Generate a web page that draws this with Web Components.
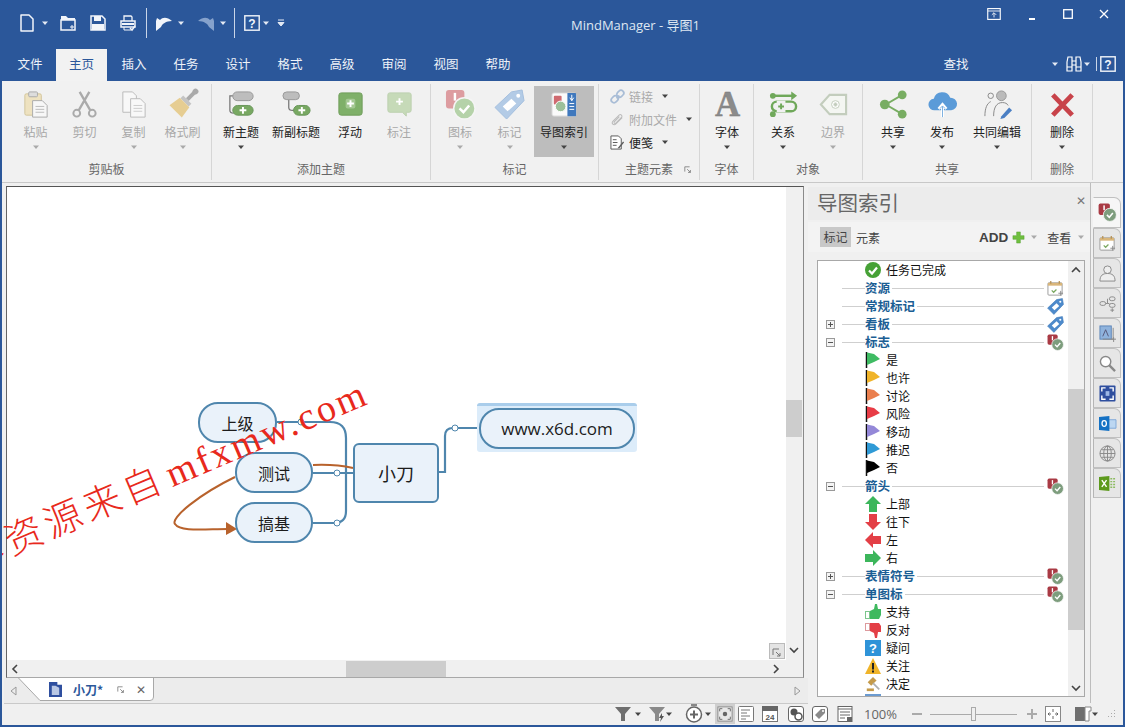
<!DOCTYPE html>
<html>
<head>
<meta charset="utf-8">
<style>
    html, body { margin: 0; padding: 0; height: 100%; overflow: hidden; }
</style>
</head>
<body>
<app-window>
    <title-bar></title-bar>
    <rib-bon>
        <rib-group w="210" pl="9" label="剪贴板">
            <rib-btn w="49" icon="paste" off>粘贴</rib-btn>
            <rib-btn w="49" icon="cut" off noarrow>剪切</rib-btn>
            <rib-btn w="49" icon="copy" off>复制</rib-btn>
            <rib-btn w="49" icon="brush" off>格式刷</rib-btn>
        </rib-group>
        <rib-group w="219" pl="4" label="添加主题">
            <rib-btn w="50" icon="newtopic">新主题</rib-btn>
            <rib-btn w="60" icon="subtopic" noarrow>新副标题</rib-btn>
            <rib-btn w="48" icon="float" noarrow>浮动</rib-btn>
            <rib-btn w="50" icon="callout" off noarrow>标注</rib-btn>
        </rib-group>
        <rib-group w="168" pl="4" label="标记">
            <rib-btn w="50" icon="mark-off" off>图标</rib-btn>
            <rib-btn w="49" icon="tag-off" off>标记</rib-btn>
            <rib-btn w="60" icon="mapindex" active>导图索引</rib-btn>
        </rib-group>
        <rib-group w="101" pl="8" label="主题元素" launcher>
            <small-btns>
                <small-btn icon="link" off>链接</small-btn>
                <small-btn icon="clip" off>附加文件</small-btn>
                <small-btn icon="note">便笺</small-btn>
            </small-btns>
        </rib-group>
        <rib-group w="54" pl="2" label="字体">
            <rib-btn w="50" icon="font">字体</rib-btn>
        </rib-group>
        <rib-group w="109" pl="4" label="对象">
            <rib-btn w="50" icon="relation">关系</rib-btn>
            <rib-btn w="50" icon="boundary" off>边界</rib-btn>
        </rib-group>
        <rib-group w="169" pl="5" label="共享">
            <rib-btn w="50" icon="share">共享</rib-btn>
            <rib-btn w="48" icon="publish">发布</rib-btn>
            <rib-btn w="62" icon="coedit">共同编辑</rib-btn>
        </rib-group>
        <rib-group w="61" pl="5" label="删除">
            <rib-btn w="50" icon="delete">删除</rib-btn>
        </rib-group>
    </rib-bon>
    <main-area>
        <map-pane slot="map">
            <map-node x="198" y="402" w="79" h="41" r="20">上级</map-node>
            <map-node x="235" y="452" w="78" h="41" r="20">测试</map-node>
            <map-node x="235" y="502" w="78" h="41" r="20">搞基</map-node>
            <map-node x="353" y="443" w="86" h="60" r="6" fs="18">小刀</map-node>
            <map-node x="479" y="408" w="156" h="41" r="20" fs="17" selected>www.x6d.com</map-node>
        </map-pane>
        <index-panel slot="panel">
            <idx-row icon="done">任务已完成</idx-row>
            <idx-row head icon="calendar">资源</idx-row>
            <idx-row head icon="tag">常规标记</idx-row>
            <idx-row head toggle="+" icon="tag">看板</idx-row>
            <idx-row head toggle="-" icon="mark">标志</idx-row>
            <idx-row icon="flag-green">是</idx-row>
            <idx-row icon="flag-yellow">也许</idx-row>
            <idx-row icon="flag-orange">讨论</idx-row>
            <idx-row icon="flag-red">风险</idx-row>
            <idx-row icon="flag-purple">移动</idx-row>
            <idx-row icon="flag-blue">推迟</idx-row>
            <idx-row icon="flag-black">否</idx-row>
            <idx-row head toggle="-" icon="mark">箭头</idx-row>
            <idx-row icon="arrow-up">上部</idx-row>
            <idx-row icon="arrow-down">往下</idx-row>
            <idx-row icon="arrow-left">左</idx-row>
            <idx-row icon="arrow-right">右</idx-row>
            <idx-row head toggle="+" icon="mark">表情符号</idx-row>
            <idx-row head toggle="-" icon="mark">单图标</idx-row>
            <idx-row icon="thumb-up">支持</idx-row>
            <idx-row icon="thumb-down">反对</idx-row>
            <idx-row icon="question">疑问</idx-row>
            <idx-row icon="warning">关注</idx-row>
            <idx-row icon="gavel">决定</idx-row>
            <idx-row icon="bluebox"></idx-row>
        </index-panel>
        <side-tabs slot="tabs"></side-tabs>
    </main-area>
    <status-bar></status-bar>
    <water-mark></water-mark>
</app-window>

<script>
    const W = '#f2f5fa'
    const flag = (c) => `<svg viewBox="0 0 16 16"><path d="M1.500 0V16" stroke="#111" stroke-width="1.500"/><path d="M2 .5 9 2l6 5-6 3-7 3z" fill="${c}"/></svg>`
    const plus = (x, y, s, c) => `<path d="M${x - s} ${y}h${2 * s}M${x} ${y - s}v${2 * s}" stroke="${c}" stroke-width="2"/>`
    const markIcon = (a, b) => `<svg viewBox="0 0 32 32"><rect x="1" y="1" width="19" height="19" rx="3" fill="${a}"/><rect x="9" y="4" width="2.500" height="8" fill="#fff"/><circle cx="20" cy="20" r="11" fill="${b}" stroke="#f5f5f5" stroke-width="1.500"/><path d="M15 20l4 4 6-7" fill="none" stroke="#fff" stroke-width="2.600"/></svg>`
    const tagIcon = (c, d) => `<svg viewBox="0 0 32 32"><path d="M1 19 18 3l11-2 2 11L13 31z" fill="${c}" stroke="${d}"/><path d="M9 18 18 10l5 5-9 8z" fill="#fff"/><circle cx="25" cy="7" r="2" fill="#fff"/></svg>`

    // every icon is kept here, <x-icon name="..."> looks them up
    const ICONS = {
        // title bar
        doc: `<svg viewBox="0 0 14 18"><path d="M1 1h8l4 4v12H1z" fill="none" stroke="${W}" stroke-width="1.500" stroke-linejoin="round"/></svg>`,
        open: `<svg viewBox="0 0 16 16"><path d="M1 1h5l2 2h7v2H1z" fill="${W}"/><path d="M1 5h14v10H1z" fill="#2b579a" stroke="${W}" stroke-width="1.500"/><path d="M10 12h4M12 10v4" stroke="${W}"/></svg>`,
        save: `<svg viewBox="0 0 16 16"><path d="M1 1h11l3 3v11H1z" fill="none" stroke="${W}" stroke-width="1.500"/><path d="M4 1h7v5H4z" fill="${W}"/><path d="M2 9h12v6H2z" fill="${W}"/></svg>`,
        print: `<svg viewBox="0 0 16 16"><path d="M4 6V1h7l1 1v4" fill="none" stroke="${W}" stroke-width="1.300"/><path d="M1 6h14v6H1z" fill="none" stroke="${W}" stroke-width="1.500"/><path d="M2 8h12v2H2z" fill="${W}"/><path d="M4 12v3h7" fill="none" stroke="${W}"/><path d="M10 13l2 2 3-4" fill="none" stroke="${W}" stroke-width="1.500"/></svg>`,
        undo: `<svg viewBox="0 0 18 18"><path d="M1 7v10l5-4C7 10 11 7 17 7 12 3 8 3 5 6L2 4z" fill="${W}"/></svg>`,
        redo: `<svg viewBox="0 0 18 18"><path d="M17 7v10l-5-4C11 10 7 7 1 7 6 3 10 3 13 6l3-2z" fill="#86a2cc"/></svg>`,
        help: `<svg viewBox="0 0 16 16"><rect x=".8" y=".8" width="14.400" height="14.400" fill="none" stroke="${W}" stroke-width="1.400"/><text x="8" y="13" font-size="12" font-weight="bold" font-family="Liberation Sans" text-anchor="middle" fill="${W}">?</text></svg>`,
        caretw: `<svg viewBox="0 0 8 8"><path d="M1 2.500h6L4 6z" fill="#e4eaf4"/></svg>`,
        cust: `<svg viewBox="0 0 8 10"><path d="M1 2h6M1 4.500h6L4 8z" fill="#e4eaf4" stroke="#e4eaf4"/></svg>`,
        ribbonopt: `<svg viewBox="0 0 16 14"><rect x=".7" y=".7" width="14.600" height="12.600" fill="none" stroke="#fff" stroke-width="1.300"/><path d="M1 3.500h14" stroke="#fff"/><path d="M8 11V6M5.500 8 8 5.500 10.500 8" fill="none" stroke="#fff"/></svg>`,
        binoc: `<svg viewBox="0 0 16 16"><path d="M2 1h4v14H1V6zM10 1h4l1 5v9h-5z" fill="none" stroke="#fff" stroke-width="1.200"/><path d="M6 5h4M6 9h4M1 11h5M10 11h5" stroke="#fff"/></svg>`,

        // clipboard group
        paste: `<svg viewBox="0 0 32 32"><rect x="5" y="5" width="17" height="22" rx="1.500" fill="#eee2c0" stroke="#d3c59c"/><rect x="9" y="3" width="9" height="5" rx="1" fill="#ddd" stroke="#aaa"/><path d="M13 12h10l5 5v12H13z" fill="#f7f7f7" stroke="#aaa"/><path d="M16 18h9M16 21h9M16 24h9" stroke="#bbb"/></svg>`,
        cut: `<svg viewBox="0 0 32 32"><circle cx="8" cy="25" r="3.500" fill="none" stroke="#aaa" stroke-width="2"/><circle cx="24" cy="25" r="3.500" fill="none" stroke="#aaa" stroke-width="2"/><path d="M10 22 21 3M22 22 11 3" stroke="#aaa" stroke-width="2.400"/></svg>`,
        copy: `<svg viewBox="0 0 32 32"><path d="M5 3h10l4 4v17H5z" fill="#f8f8f8" stroke="#bbb"/><path d="M13 10h10l5 5v14H13z" fill="#f8f8f8" stroke="#bbb"/><path d="M16 17h9M16 20h9M16 23h9" stroke="#ccc"/></svg>`,
        brush: `<svg viewBox="0 0 32 32"><g transform="rotate(45 16 16)"><rect x="14" y="-3" width="4" height="12" fill="#aaa"/><circle cx="16" cy="-3" r="3" fill="#aaa"/><rect x="10" y="9" width="12" height="4" fill="#c4c4c4"/><path d="M9 13h14l2 13H7z" fill="#e6cd92"/></g></svg>`,

        // add topic group
        newtopic: `<svg viewBox="0 0 32 32"><path d="M8 7H4v15q0 3 4 3" fill="none" stroke="#777" stroke-width="1.300"/><rect x="7" y="3" width="21" height="9" rx="4.500" fill="#bdbdbd" stroke="#999"/><rect x="7" y="17" width="21" height="10" rx="5" fill="#78a862" stroke="#68965a"/>${plus(17.5, 22, 3.5, '#fff')}</svg>`,
        subtopic: `<svg viewBox="0 0 32 32"><path d="M8 11v8q0 3 4 3h3" fill="none" stroke="#777" stroke-width="1.300"/><rect x="2" y="3" width="17" height="8" rx="4" fill="#bdbdbd" stroke="#999"/><rect x="13" y="17" width="17" height="10" rx="5" fill="#78a862" stroke="#68965a"/>${plus(21.5, 22, 3.5, '#fff')}</svg>`,
        float: `<svg viewBox="0 0 32 32"><rect x="4" y="4" width="24" height="23" rx="2.500" fill="#7fb069" stroke="#6d9c59"/><rect x="11" y="10" width="10" height="10" rx="2" fill="#a4c893"/>${plus(16, 15, 3.5, '#fff')}</svg>`,
        callout: `<svg viewBox="0 0 32 32"><path d="M6 4h20q2 0 2 2v16q0 2-2 2h-3v4l-4-4H6q-2 0-2-2V6q0-2 2-2z" fill="#c6dab8" stroke="#bccfae"/>${plus(16, 13, 3.5, '#fff')}</svg>`,

        // markers group
        'mark-off': markIcon('#dd9ca0', '#b5d2a9'),
        mark: markIcon('#a93a44', '#7d9d7d'),
        'tag-off': tagIcon('#b3cbe6', '#a3bedd'),
        tag: tagIcon('#4d8acb', '#3f79b8'),
        mapindex: `<svg viewBox="0 0 32 32"><rect x="3" y="4" width="25" height="24" rx="2" fill="#fafafa" stroke="#d0d0d0"/><path d="M19 4h8q1 0 1 1v22q0 1-1 1h-8z" fill="#3f78bd"/><rect x="5" y="7" width="8" height="9" rx="1" fill="#cf6a70"/><circle cx="12" cy="18" r="5.500" fill="#9dc09a" stroke="#fff"/><path d="M21 15h5M21 18h5M21 21h5" stroke="#fff"/><path d="M23.500 6v6M21.500 9 23.500 12 25.500 9" stroke="#fff" fill="none"/></svg>`,

        // topic elements
        link: `<svg viewBox="0 0 16 16"><path d="M7 10 10 7" stroke="#9db6d3" stroke-width="2"/><rect x="1" y="8" width="8" height="6" rx="3" transform="rotate(-45 5 11)" fill="none" stroke="#a9bdd6" stroke-width="1.800"/><rect x="7" y="2" width="8" height="6" rx="3" transform="rotate(-45 11 5)" fill="none" stroke="#a9bdd6" stroke-width="1.800"/></svg>`,
        clip: `<svg viewBox="0 0 16 16"><path d="M13 6 6 13c-2 2-5-1-3-3l7-7c1.500-1 3.500 1 2.500 2.500L6 12c-1 1-2-.5-1.500-1.500L10 5" fill="none" stroke="#bbb" stroke-width="1.100"/></svg>`,
        note: `<svg viewBox="0 0 16 16"><path d="M1 1h8l3 3v11H1z" fill="#fff" stroke="#555"/><path d="M3 5h4M3 8h5M3 11h4" stroke="#555"/><path d="M8 14 14 7l1 1-5 6z" fill="#5a5a5a"/></svg>`,
        font: `<svg viewBox="0 0 32 32"><text x="16" y="28" font-size="36" font-weight="bold" font-family="Liberation Serif" text-anchor="middle" fill="#8b8b8b" stroke="#777" stroke-width=".4">A</text></svg>`,

        // object group
        relation: `<svg viewBox="0 0 32 32"><path d="M6 7h20" stroke="#6fa85a" stroke-width="2.500"/><path d="M24 2.500l6 4.500-6 4.500z" fill="#6fa85a"/><circle cx="5" cy="7" r="3" fill="#6fa85a"/><rect x="4" y="13" width="25" height="10" rx="5" fill="none" stroke="#6fa85a" stroke-width="2.500"/><rect x="9" y="12" width="9" height="12" fill="#f1f1f1"/>${plus(13.5, 18, 3, '#6fa85a')}<circle cx="5" cy="26" r="3" fill="#6fa85a"/></svg>`,
        boundary: `<svg viewBox="0 0 32 32"><path d="M3 16 12 6h17v20H12z" fill="#f4f6f2" stroke="#c3cdbd" stroke-width="2.200"/><circle cx="18" cy="16" r="4" fill="#fff" stroke="#c3cdbd"/>${plus(18, 16, 2, '#c3cdbd')}</svg>`,

        // share group
        share: `<svg viewBox="0 0 32 32"><path d="M8 16 25 6M8 16 25 26" stroke="#78ad62" stroke-width="2"/><circle cx="7" cy="16" r="5" fill="#78ad62"/><circle cx="25" cy="6" r="4.500" fill="#78ad62"/><circle cx="25" cy="26" r="4.500" fill="#78ad62"/></svg>`,
        publish: `<svg viewBox="0 0 32 32"><path d="M8 22a6 6 0 0 1-1-12 9 9 0 0 1 17-1 6.500 6.500 0 0 1 1 13z" fill="#5b9bd8"/><path d="M16 29V17M12 20.500 16 16 20 20.500" fill="none" stroke="#fff" stroke-width="3"/><path d="M16 29V18M13.500 20 16 17.500 18.500 20" fill="none" stroke="#5b9bd8" stroke-width=".8"/></svg>`,
        coedit: `<svg viewBox="0 0 32 32"><circle cx="20" cy="7" r="5" fill="#bbb" stroke="#999"/><circle cx="9" cy="7" r="2.800" fill="none" stroke="#888"/><path d="M3 28c0-8 2-13 6-15M12 28c0-9 3-14 9-14 3 0 5 1 6 3" fill="none" stroke="#888"/><path d="M20 28l8-9 3 3-8 8-4 1z" fill="#4a7fc4"/></svg>`,
        delete: `<svg viewBox="0 0 32 32"><path d="M6 6 26 27M26 6 6 27" stroke="#c8434a" stroke-width="5"/></svg>`,

        // panel
        done: `<svg viewBox="0 0 16 16"><circle cx="8" cy="8" r="8" fill="#46a136"/><path d="M4 8.500 7 11.500 12 5.500" fill="none" stroke="#fff" stroke-width="2.200"/></svg>`,
        calendar: `<svg viewBox="0 0 18 18"><rect x="1" y="3" width="15" height="13" rx="1" fill="#fff" stroke="#999"/><path d="M1 3h15v3H1z" fill="#d9b67a"/><path d="M4 1v3M13 1v3" stroke="#b58f50" stroke-width="1.300"/><path d="M5 11l2 2 3-3" fill="none" stroke="#7aa860" stroke-width="1.300"/><path d="M12 14h5M14.500 11.500v5" stroke="#888"/></svg>`,
        addwhite: `<svg viewBox="0 0 14 14"><path d="M5 1h4v4h4v4H9v4H5V9H1V5h4z" fill="#6fbf3f" stroke="#4f9a2a" stroke-width=".5"/></svg>`,
        'flag-green': flag('#3fbb63'), 'flag-yellow': flag('#f0b429'), 'flag-orange': flag('#ea7f4e'),
        'flag-red': flag('#e83c46'), 'flag-purple': flag('#9488d8'), 'flag-blue': flag('#2f9ad6'), 'flag-black': flag('#000'),
        'arrow-up': `<svg viewBox="0 0 16 16"><path d="M8 0 16 8H12V16H4V8H0z" fill="#3cb65b"/></svg>`,
        'arrow-down': `<svg viewBox="0 0 16 16"><path d="M8 16 16 8H12V0H4V8H0z" fill="#e33f46"/></svg>`,
        'arrow-left': `<svg viewBox="0 0 16 16"><path d="M0 8 8 0V4H16V12H8V16z" fill="#e33f46"/></svg>`,
        'arrow-right': `<svg viewBox="0 0 16 16"><path d="M16 8 8 0V4H0V12H8V16z" fill="#3cb65b"/></svg>`,
        'thumb-up': `<svg viewBox="0 0 16 16"><rect x=".5" y="7.500" width="4" height="7" fill="#fff" stroke="#7cc68d"/><path d="M5 7 9 5l1-5h2l1 5h3v6l-2 4H5z" fill="#3fb95f"/></svg>`,
        'thumb-down': `<svg viewBox="0 0 16 16"><rect x=".5" y="1.500" width="4" height="7" fill="#fff" stroke="#dd9a9d"/><path d="M5 1h9l2 3v6h-3l-1 6h-2L9 11 5 9z" fill="#e33f46"/></svg>`,
        question: `<svg viewBox="0 0 16 16"><rect width="16" height="16" fill="#2f93d8"/><text x="8" y="13" font-size="13" font-weight="bold" font-family="Liberation Sans" text-anchor="middle" fill="#fff">?</text></svg>`,
        warning: `<svg viewBox="0 0 16 16"><path d="M8 0 16 16H0z" fill="#f0b429"/><path d="M8 5v6.500M8 12.500v2" stroke="#222" stroke-width="2"/></svg>`,
        gavel: `<svg viewBox="0 0 16 18"><path d="M2 7 8 1l4 4-6 6z" fill="#c49a4a"/><path d="M8 8l7 7" stroke="#b0b0b0" stroke-width="2"/><path d="M1 14h8v3H1z" fill="#c49a4a"/></svg>`,
        bluebox: `<svg viewBox="0 0 16 16"><rect width="16" height="16" fill="#6c9bd0"/></svg>`,
        funnel: `<svg viewBox="0 0 16 16"><path d="M0 1h16l-6 7v7H6V8z" fill="#6f6f6f"/></svg>`,
        funnel2: `<svg viewBox="0 0 16 16"><path d="M0 1h16l-6 7v7H6V8z" fill="#8a8a8a"/><path d="M13 7l-3 5h2l-1 4 4-6h-2z" fill="#555"/></svg>`,

        // side tabs
        person: `<svg viewBox="0 0 18 18"><circle cx="9" cy="5" r="4" fill="#eee" stroke="#888"/><path d="M1 17c0-6 3-8 8-8s8 2 8 8z" fill="#eee" stroke="#888"/></svg>`,
        topics: `<svg viewBox="0 0 18 18"><rect x="1" y="7" width="6" height="4" rx="2" fill="none" stroke="#888"/><rect x="11" y="2" width="6" height="4" rx="2" fill="none" stroke="#888"/><rect x="11" y="9" width="6" height="4" rx="2" fill="none" stroke="#888"/><path d="M7 9h2M9 4v5h2M14 14v4M12 16h4" fill="none" stroke="#888"/></svg>`,
        notes: `<svg viewBox="0 0 18 18"><rect x="1" y="1" width="12" height="14" fill="#8fb3dd" stroke="#5d85b8"/><path d="M4 12 7 5l3 7" fill="none" stroke="#557" /><path d="M15 3v12H4" fill="none" stroke="#888"/><path d="M13 15h5M15.500 13v5" stroke="#888"/></svg>`,
        search: `<svg viewBox="0 0 18 18"><circle cx="7" cy="7" r="5.500" fill="#fff" stroke="#888" stroke-width="1.500"/><path d="M11 11l6 6" stroke="#888" stroke-width="2.500"/></svg>`,
        target: `<svg viewBox="0 0 18 18"><rect x=".5" y=".5" width="17" height="17" rx="1" fill="#2f4f9f"/><path d="M3 7V3h4M11 3h4v4M15 11v4h-4M7 15H3v-4" fill="none" stroke="#fff" stroke-width="1.500"/><rect x="7" y="6.500" width="4" height="5" fill="#9db7e6"/></svg>`,
        outlook: `<svg viewBox="0 0 18 18"><path d="M9 5h9v9H9z" fill="#bcd7f2" stroke="#7fa8d8"/><path d="M0 2l11-1v16L0 16z" fill="#1572c4"/><ellipse cx="5.500" cy="9" rx="2.300" ry="3" fill="none" stroke="#fff" stroke-width="1.400"/></svg>`,
        globe: `<svg viewBox="0 0 18 18"><circle cx="9" cy="9" r="8" fill="#e4e4e4" stroke="#888"/><ellipse cx="9" cy="9" rx="4" ry="8" fill="none" stroke="#888"/><path d="M1 9h16M2.500 5h13M2.500 13h13M9 1v16" stroke="#888"/></svg>`,
        excel: `<svg viewBox="0 0 18 18"><path d="M0 2l11-1v16L0 16z" fill="#5d9a1d"/><path d="M3 5.500 8 12.500M8 5.500 3 12.500" stroke="#fff" stroke-width="1.500"/><path d="M12 4h5M12 7h5M12 10h5M12 13h5" stroke="#8dbb62" stroke-width="1.500" stroke-dasharray="2 1"/></svg>`,

        // status bar
        clock: `<svg viewBox="0 0 18 18"><circle cx="9" cy="9.500" r="7.500" fill="#fff" stroke="#666" stroke-width="1.500"/><path d="M5 9.500h8M9 5.500v8" stroke="#666" stroke-width="2"/><path d="M6 0h6" stroke="#666" stroke-width="1.500"/></svg>`,
        focus: `<svg viewBox="0 0 18 18"><rect x="1" y="1" width="16" height="16" fill="#e8e8e8" stroke="#888"/><path d="M3 6V3h3M12 3h3v3M15 12v3h-3M6 15H3v-3" fill="none" stroke="#666"/><circle cx="9" cy="9" r="2.500" fill="#666"/></svg>`,
        outline: `<svg viewBox="0 0 16 16"><rect x=".5" y=".5" width="15" height="15" rx="1" fill="#fff" stroke="#777"/><path d="M3 4h9M3 7h6M3 10h9M3 13h5" stroke="#777"/></svg>`,
        cal24: `<svg viewBox="0 0 16 16"><rect x=".5" y=".5" width="15" height="15" fill="#fff" stroke="#777"/><path d="M0 0h16v5H0z" fill="#666"/><text x="8" y="14" font-size="8" font-weight="bold" font-family="Liberation Sans" text-anchor="middle" fill="#555">24</text></svg>`,
        circles: `<svg viewBox="0 0 16 16"><rect x=".5" y=".5" width="15" height="15" rx="2.500" fill="#fff" stroke="#666"/><circle cx="6" cy="6" r="3.500" fill="#555"/><circle cx="10.500" cy="10.500" r="3.500" fill="#fff" stroke="#555" stroke-width="1.500"/></svg>`,
        tagbox: `<svg viewBox="0 0 16 16"><rect x=".5" y=".5" width="15" height="15" rx="2.500" fill="#fff" stroke="#666"/><path d="M3 9 9 3h4v4l-6 6z" fill="#8a8a8a"/><circle cx="11" cy="5" r="1" fill="#fff"/></svg>`,
        notesbox: `<svg viewBox="0 0 16 16"><rect x="1" y=".5" width="14" height="15" fill="#fff" stroke="#666"/><path d="M1 3h14M3 6h10M3 9h10M3 12h5" stroke="#666"/><rect x="10" y="11" width="5" height="4" fill="#666"/></svg>`,
        fit: `<svg viewBox="0 0 16 16"><rect x=".5" y=".5" width="15" height="15" fill="#fff" stroke="#888"/><path d="M8 3v3M8 10v3M3 8h3M10 8h3M3 8l1.500-1.500M3 8l1.500 1.500M13 8l-1.500-1.500M13 8l-1.500 1.500" stroke="#666" fill="none"/></svg>`,
        panelview: `<svg viewBox="0 0 16 16"><path d="M0 1h10v14H0z" fill="#6f6f6f"/><path d="M10 1h6v4h-2v10h-4z" fill="#fff" stroke="#888"/></svg>`,
        grip: `<svg viewBox="0 0 10 10"><path d="M8 1h1v1H8zM5 4h1v1H5zM8 4h1v1H8zM2 7h1v1H2zM5 7h1v1H5zM8 7h1v1H8z" fill="#aaa"/></svg>`,
        caret: `<svg viewBox="0 0 8 8"><path d="M1 2.500h6L4 6z" fill="#444"/></svg>`,
        caretoff: `<svg viewBox="0 0 8 8"><path d="M1 2.500h6L4 6z" fill="#aaa"/></svg>`,
        launcher: `<svg viewBox="0 0 10 10"><path d="M1 7V1h6" fill="none" stroke="#777"/><path d="M4 4l4 4M8 5v3H5" fill="none" stroke="#777"/></svg>`,
        mapicon: `<svg viewBox="0 0 14 16"><path d="M0 0h9v3h5v13H0z" fill="#2f4f9f"/><path d="M3 4h4l4 2v8H3z" fill="#b9c7e4"/></svg>`,
    }

    class XIcon extends HTMLElement {
        connectedCallback() {
            if (this.shadowRoot) return
            const size = (this.getAttribute('size') || '16').split(' ')
            const w = size[0]
            const h = size[1] || w
            this.attachShadow({ mode: 'open' }).innerHTML = `
                <style>
                    :host { display: inline-flex; flex: none; width: ${w}px; height: ${h}px; }
                    svg { width: 100%; height: 100%; display: block; overflow: visible; }
                </style>
                ${ICONS[this.getAttribute('name')] || ''}`
        }
    }
    customElements.define('x-icon', XIcon)

    class AppWindow extends HTMLElement {
        constructor() {
            super()
            this.attachShadow({ mode: 'open' }).innerHTML = `
                <style>
                    :host {
                        display: flex; flex-direction: column; position: relative; overflow: hidden;
                        width: 1125px; height: 727px; box-sizing: border-box;
                        border: 2px solid #2b579a; border-top: 0;
                        background: #f0f0f0; color: #222;
                        font: 12px "Noto Sans CJK SC", "Liberation Sans", sans-serif;
                    }
                </style>
                <slot></slot>`
        }
    }
    customElements.define('app-window', AppWindow)

    class TitleBar extends HTMLElement {
        constructor() {
            super()
            const tabs = ['文件', '主页', '插入', '任务', '设计', '格式', '高级', '审阅', '视图', '帮助']
            this.attachShadow({ mode: 'open' }).innerHTML = `
                <style>
                    :host { display: block; flex: none; height: 81px; background: #2b579a; color: #eef2f8; margin: 0 -2px; }
                    .top { display: flex; align-items: center; height: 49px; }
                    .qat { display: flex; align-items: center; width: 571px; height: 30px; padding-left: 20px; box-sizing: border-box; flex: none; margin-top: -4px; }
                    .sep { width: 1px; height: 30px; background: #c9d5e8; flex: none; }
                    .title { flex: 1; font: 13px "Open Sans", "Noto Sans CJK SC", sans-serif; color: #dfe7f2; margin-top: -1px; }
                    .win { display: flex; align-items: center; margin-top: -21px; padding-right: 16px; }
                    .win svg { display: block; }
                    .row { display: flex; align-items: stretch; height: 32px; padding-left: 4px; }
                    .tab { width: 52px; flex: none; text-align: center; font-size: 12.5px; line-height: 30px; }
                    .tab.on { background: #f2f2f2; color: #2b579a; width: 51px; margin-left: 0; margin-right: 1px; }
                    .find { margin-left: 406px; width: 52px; flex: none; text-align: center; font-size: 12.5px; line-height: 30px; }
                    .tools { display: flex; align-items: center; margin-left: 69px; height: 30px; flex: none; }
                    .bar { width: 1px; height: 14px; background: #c9d5e8; margin: 0 3px 0 5px; }
                </style>
                <div class="top">
                    <div class="qat">
                        <x-icon name="doc" size="14 18"></x-icon>
                        <x-icon name="caretw" size="8" style="margin-left:7px"></x-icon>
                        <x-icon name="open" style="margin-left:11px"></x-icon>
                        <x-icon name="save" style="margin-left:14px"></x-icon>
                        <x-icon name="print" style="margin-left:14px"></x-icon>
                        <span class="sep" style="margin-left:10px"></span>
                        <x-icon name="undo" size="18" style="margin-left:8px"></x-icon>
                        <x-icon name="caretw" size="8" style="margin-left:4px"></x-icon>
                        <x-icon name="redo" size="18" style="margin-left:12px"></x-icon>
                        <x-icon name="caretw" size="8" style="margin-left:4px"></x-icon>
                        <span class="sep" style="margin-left:7px"></span>
                        <x-icon name="help" style="margin-left:9px"></x-icon>
                        <x-icon name="caretw" size="8" style="margin-left:2px"></x-icon>
                        <x-icon name="cust" size="8 10" style="margin-left:7px"></x-icon>
                    </div>
                    <div class="title">MindManager - 导图1</div>
                    <div class="win">
                        <x-icon name="ribbonopt" size="14 12"></x-icon>
                        <svg width="10" height="10" viewBox="0 0 10 10" style="margin-left:26px;margin-top:5px"><path d="M2 7h6" stroke="#fff" stroke-width="2"/></svg>
                        <svg width="10" height="10" viewBox="0 0 10 10" style="margin-left:26px"><rect x=".7" y=".7" width="8.600" height="8.600" fill="none" stroke="#fff" stroke-width="1.300"/></svg>
                        <svg width="10" height="10" viewBox="0 0 10 10" style="margin-left:26px"><path d="M1 1l8 8M9 1l-8 8" stroke="#fff" stroke-width="1.300"/></svg>
                    </div>
                </div>
                <div class="row">
                    ${tabs.map((t, i) => `<div class="tab ${i == 1 ? 'on' : ''}">${t}</div>`).join('')}
                    <div class="find">查找</div>
                    <div class="tools">
                        <x-icon name="caretw" size="8"></x-icon>
                        <x-icon name="binoc" size="16" style="margin-left:7px"></x-icon>
                        <x-icon name="caretw" size="8" style="margin-left:1px"></x-icon>
                        <span class="bar"></span>
                        <x-icon name="help" size="16"></x-icon>
                    </div>
                </div>`
        }
    }
    customElements.define('title-bar', TitleBar)

    class RibBon extends HTMLElement {
        constructor() {
            super()
            this.attachShadow({ mode: 'open' }).innerHTML = `
                <style>
                    :host { display: flex; flex: none; height: 102px; background: #f1f1f1; border-bottom: 1px solid #c8c8c8; box-sizing: border-box; }
                </style>
                <slot></slot>`
        }
    }
    customElements.define('rib-bon', RibBon)

    class RibGroup extends HTMLElement {
        constructor() {
            super()
            const launcher = this.hasAttribute('launcher')
                ? '<x-icon class="launch" name="launcher" size="8"></x-icon>' : ''
            this.attachShadow({ mode: 'open' }).innerHTML = `
                <style>
                    :host {
                        display: flex; flex-direction: column; flex: none; box-sizing: border-box;
                        width: ${this.getAttribute('w')}px; height: 96px; margin-top: 3px;
                        border-right: 1px solid #d6d6d6;
                    }
                    .body { display: flex; height: 71px; margin-top: 2px; padding-left: ${this.getAttribute('pl')}px; }
                    .label { position: relative; text-align: center; line-height: 20px; margin-top: 2px; color: #666; }
                    .launch { position: absolute; right: 7px; top: 7px; }
                </style>
                <div class="body"><slot></slot></div>
                <div class="label">${this.getAttribute('label')}${launcher}</div>`
        }
    }
    customElements.define('rib-group', RibGroup)

    class RibBtn extends HTMLElement {
        constructor() {
            super()
            const off = this.hasAttribute('off')
            const arrow = this.hasAttribute('noarrow') ? '' : `<x-icon name="${off ? 'caretoff' : 'caret'}" size="8"></x-icon>`
            this.attachShadow({ mode: 'open' }).innerHTML = `
                <style>
                    :host {
                        display: flex; flex-direction: column; align-items: center; flex: none;
                        width: ${this.getAttribute('w')}px; height: 71px; padding-top: 3px; box-sizing: border-box;
                        color: ${off ? '#a8a8a8' : '#222'};
                        background: ${this.hasAttribute('active') ? '#bdbdbd' : 'none'};
                    }
                    .txt { line-height: 18px; margin-top: 3px; white-space: nowrap; height: 18px; }
                    .car { display: flex; height: 8px; margin-top: 2px; }
                </style>
                <x-icon name="${this.getAttribute('icon')}" size="31"></x-icon>
                <div class="txt"><slot></slot></div>
                <div class="car">${arrow}</div>`
        }
    }
    customElements.define('rib-btn', RibBtn)

    class SmallBtns extends HTMLElement {
        constructor() {
            super()
            this.attachShadow({ mode: 'open' }).innerHTML = `
                <style>
                    :host { display: flex; flex-direction: column; gap: 5px; padding: 1px 0 0 3px; }
                </style>
                <slot></slot>`
        }
    }
    customElements.define('small-btns', SmallBtns)

    class SmallBtn extends HTMLElement {
        constructor() {
            super()
            const off = this.hasAttribute('off')
            this.attachShadow({ mode: 'open' }).innerHTML = `
                <style>
                    :host { display: flex; align-items: center; height: 18px; color: ${off ? '#aaa' : '#222'}; white-space: nowrap; }
                    .t { margin-left: 4px; margin-right: 8px; }
                </style>
                <x-icon name="${this.getAttribute('icon')}" size="15"></x-icon>
                <span class="t"><slot></slot></span>
                <x-icon name="caret" size="8"></x-icon>`
        }
    }
    customElements.define('small-btn', SmallBtn)

    class MainArea extends HTMLElement {
        constructor() {
            super()
            this.attachShadow({ mode: 'open' }).innerHTML = `
                <style>
                    :host { display: flex; flex: 1; min-height: 0; }
                </style>
                <slot name="map"></slot>
                <slot name="panel"></slot>
                <slot name="tabs"></slot>`
        }
    }
    customElements.define('main-area', MainArea)

    class MapPane extends HTMLElement {
        constructor() {
            super()
            this.attachShadow({ mode: 'open' }).innerHTML = `
                <style>
                    :host { display: flex; flex-direction: column; width: 806px; flex: none; padding-top: 3px; box-sizing: border-box; }
                    .frame {
                        margin-left: 4px; width: 798px; flex: none; height: 492px; box-sizing: border-box;
                        border: 1px solid #8a8a8a; border-top-color: #555; border-left-color: #666; border-bottom-color: #a8a8a8;
                        display: grid; grid-template-columns: 779px 17px; grid-template-rows: 473px 17px;
                        background: #f0f0f0;
                    }
                    .canvas { position: relative; background: #fff; overflow: hidden; }
                    .canvas svg.links { position: absolute; left: 0; top: 0; }
                    .corner { position: absolute; right: 1px; bottom: 1px; width: 16px; height: 16px; background: #e4e4e4; border: 1px solid #bbb; box-sizing: border-box; }
                    .vs { position: relative; display: flex; flex-direction: column; }
                    .vs .thumb { width: 16px; height: 37px; background: #cdcdcd; margin-top: 213px; }
                    .arr { position: absolute; color: #444; }
                    .hs { display: flex; align-items: center; position: relative; }
                    .hs .thumb { width: 100px; height: 16px; background: #cdcdcd; margin-left: 339px; }
                    .tabs { display: flex; align-items: flex-start; height: 25px; flex: none; margin-left: 2px; position: relative; background: #ececec; border-bottom: 1px solid #c9c9c9; box-sizing: content-box; }
                    .tab { position: relative; margin-left: 14px; width: 136px; height: 23px; display: flex; align-items: center; }
                    .tab svg.bg { position: absolute; left: 0; top: 0; }
                    .tab .in { position: relative; display: flex; align-items: center; padding-left: 31px; }
                    .name { color: #2b579a; font-weight: 700; font-size: 12px; margin-left: 11px; width: 44px; }
                    .x { color: #666; font-size: 12px; margin-left: 11px; font-family: "Liberation Sans"; }
                    .tri { position: absolute; top: 8px; }
                </style>
                <div class="frame">
                    <div class="canvas">
                        <svg class="links" width="779" height="473" viewBox="7 187 779 473" fill="none">
                            <g stroke="#4f86ad" stroke-width="2.200">
                                <path d="M277 422H330Q346 422 346 438V511Q346 523 334 523H313"/>
                                <path d="M313 473H353"/>
                                <path d="M439 472H445V436Q445 428 453 428H479"/>
                            </g>
                            <path d="M313 465Q335 464 353 468" stroke="#b8622c" stroke-width="2"/>
                            <path d="M235 477C200 494 170 518 175 524C180 532 205 529 228 529" stroke="#b8622c" stroke-width="2"/>
                            <path d="M226 522 237 529 226 535z" fill="#b8622c"/>
                            <g fill="#fff" stroke="#4f86ad" stroke-width="1">
                                <circle cx="301" cy="422" r="3"/><circle cx="337" cy="473" r="3"/>
                                <circle cx="337" cy="523" r="3"/><circle cx="455" cy="428" r="3"/>
                            </g>
                        </svg>
                        <slot></slot>
                        <div class="corner"><x-icon name="launcher" size="10" style="margin:2px"></x-icon></div>
                    </div>
                    <div class="vs">
                        <div class="thumb"></div>
                        <svg class="arr" style="left:3px;bottom:6px" width="10" height="8" viewBox="0 0 10 8"><path d="M1 2l4 4 4-4" fill="none" stroke="#444" stroke-width="1.600"/></svg>
                    </div>
                    <div class="hs">
                        <div class="thumb"></div>
                        <svg class="arr" style="left:4px;top:4px" width="8" height="10" viewBox="0 0 8 10"><path d="M6 1 2 5l4 4" fill="none" stroke="#444" stroke-width="1.600"/></svg>
                        <svg class="arr" style="right:6px;top:4px" width="8" height="10" viewBox="0 0 8 10"><path d="M2 1l4 4-4 4" fill="none" stroke="#444" stroke-width="1.600"/></svg>
                    </div>
                    <div style="background:#f0f0f0"></div>
                </div>
                <div class="tabs">
                    <svg class="tri" style="left:6px" width="7" height="10" viewBox="0 0 7 10"><path d="M6 1 1 5l5 4z" fill="none" stroke="#999"/></svg>
                    <div class="tab">
                        <svg class="bg" width="136" height="23" viewBox="0 0 136 23"><path d="M.5 0 22 22.500H132Q135.500 22.500 135.500 19V0" fill="#fff" stroke="#a8a8a8"/></svg>
                        <div class="in">
                            <x-icon name="mapicon" size="13 15"></x-icon>
                            <span class="name">小刀*</span>
                            <x-icon name="launcher" size="8"></x-icon>
                            <span class="x">✕</span>
                        </div>
                    </div>
                    <svg class="tri" style="right:7px" width="7" height="10" viewBox="0 0 7 10"><path d="M1 1l5 4-5 4z" fill="none" stroke="#999"/></svg>
                </div>`
        }
    }
    customElements.define('map-pane', MapPane)

    class MapNode extends HTMLElement {
        constructor() {
            super()
            const a = (n) => Number(this.getAttribute(n))
            const selected = this.hasAttribute('selected')
            this.attachShadow({ mode: 'open' }).innerHTML = `
                <style>
                    :host {
                        position: absolute; display: block;
                        left: ${a('x') - 7}px; top: ${a('y') - 187}px; width: ${a('w')}px; height: ${a('h')}px;
                        font-size: ${this.getAttribute('fs') || 16}px; color: #1c1c1c;
                        font-family: ${selected ? '"Open Sans",' : ''} "Noto Sans CJK SC", sans-serif;
                    }
                    .sel {
                        position: absolute; left: -2px; right: -2px; top: -5px; bottom: -3px; box-sizing: border-box;
                        background: #dcecfa; border-top: 3px solid #a9cdeb; border-radius: 3px;
                    }
                    .pill {
                        position: relative; box-sizing: border-box; width: 100%; height: 100%;
                        display: flex; align-items: center; justify-content: center;
                        background: #eaf2fa; border: 2px solid #4f86ad; border-radius: ${a('r')}px;
                    }
                </style>
                ${selected ? '<div class="sel"></div>' : ''}
                <div class="pill"><slot></slot></div>`
        }
    }
    customElements.define('map-node', MapNode)

    class IndexPanel extends HTMLElement {
        constructor() {
            super()
            this.attachShadow({ mode: 'open' }).innerHTML = `
                <style>
                    :host {
                        display: flex; flex-direction: column; flex: none; width: 283px; box-sizing: border-box;
                        border-right: 1px solid #bdbdbd; background: #f0f0f0; padding-top: 4px; height: 520px;
                    }
                    .head { display: flex; align-items: center; height: 33px; box-sizing: border-box; background: #ececec; padding: 0 0 4px 9px; font-size: 20.500px; color: #666; }
                    .close { margin-left: auto; margin-right: 4px; color: #777; font-size: 12px; margin-top: -1px; font-family: "Liberation Sans"; }
                    .tool { display: flex; align-items: center; height: 30px; margin-top: 2px; background: #f3f3f3; padding-left: 12px; }
                    .chip { background: #c8c8c8; padding: 0 3.500px; line-height: 20px; color: #444; }
                    .el { margin-left: 5px; color: #444; }
                    .add { font: 700 13.500px "Liberation Sans", sans-serif; color: #444; margin-left: 99px; }
                    .box {
                        margin: 8px 0 0 9px; width: 268px; height: 437px; box-sizing: border-box;
                        background: #fff; border: 1px solid #a8a8a8; display: flex; overflow: hidden;
                    }
                    .list { width: 250px; flex: none; }
                    .sb { position: relative; width: 16px; background: #f0f0f0; margin-left: 0; flex: none; }
                    .sb .thumb { position: absolute; left: 0; right: 0; top: 128px; height: 241px; background: #cdcdcd; }
                    .sb svg { position: absolute; left: 3px; }
                </style>
                <div class="head">导图索引<span class="close">✕</span></div>
                <div class="tool">
                    <span class="chip">标记</span><span class="el">元素</span>
                    <span class="add">ADD</span>
                    <x-icon name="addwhite" size="13" style="margin-left:4px"></x-icon>
                    <x-icon name="caretoff" size="8" style="margin-left:5px"></x-icon>
                    <span style="margin-left:9px;color:#444">查看</span>
                    <x-icon name="caretoff" size="8" style="margin-left:6px"></x-icon>
                </div>
                <div class="box">
                    <div class="list"><slot></slot></div>
                    <div class="sb">
                        <svg style="top:5px" width="10" height="8" viewBox="0 0 10 8"><path d="M1 6l4-4 4 4" fill="none" stroke="#444" stroke-width="1.600"/></svg>
                        <div class="thumb"></div>
                        <svg style="bottom:4px" width="10" height="8" viewBox="0 0 10 8"><path d="M1 2l4 4 4-4" fill="none" stroke="#444" stroke-width="1.600"/></svg>
                    </div>
                </div>`
        }
    }
    customElements.define('index-panel', IndexPanel)

    class IdxRow extends HTMLElement {
        constructor() {
            super()
            const icon = this.getAttribute('icon')
            const t = this.getAttribute('toggle')
            let body
            if (this.hasAttribute('head')) {
                const bar = t == '+' ? '<path d="M2 4.500h5M4.500 2v5" stroke="#555"/>' : t == '-' ? '<path d="M2 4.500h5" stroke="#555"/>' : ''
                const box = t ? `<svg width="9" height="9" viewBox="0 0 9 9"><rect x=".5" y=".5" width="8" height="8" fill="#f4f4f4" stroke="#999"/>${bar}</svg>` : ''
                body = `
                    <div class="tg">${box}</div>
                    <div class="ln" style="width:23px;flex:none"></div>
                    <div class="hd"><slot></slot></div>
                    <div class="ln" style="flex:1"></div>
                    <x-icon name="${icon}" size="17" style="margin:0 4px 0 3px"></x-icon>`
            } else {
                body = `
                    <x-icon name="${icon}" size="16" style="margin-left:47px"></x-icon>
                    <div class="it"><slot></slot></div>`
            }
            this.attachShadow({ mode: 'open' }).innerHTML = `
                <style>
                    :host { display: flex; align-items: center; height: 18px; }
                    .tg { width: 24px; flex: none; padding-left: 8px; box-sizing: border-box; display: flex; }
                    .ln { height: 1px; background: #cfcfcf; }
                    .hd { color: #1b5e94; font-weight: 700; font-size: 12.500px; padding-right: 2px; white-space: nowrap; margin-top: -2px; }
                    .it { margin-left: 5px; color: #111; margin-top: -2px; }
                </style>
                ${body}`
        }
    }
    customElements.define('idx-row', IdxRow)

    class SideTabs extends HTMLElement {
        constructor() {
            super()
            const names = ['mark', 'calendar', 'person', 'topics', 'notes', 'search', 'target', 'outlook', 'globe', 'excel']
            this.attachShadow({ mode: 'open' }).innerHTML = `
                <style>
                    :host { display: flex; flex-direction: column; padding: 14px 0 0 2px; box-sizing: border-box; flex: none; width: 32px; }
                    .t {
                        width: 28px; height: 30px; box-sizing: border-box; display: flex; align-items: center; justify-content: center;
                        background: #e6e6e6; border: 1px solid #c0c0c0; border-left-color: #b5b5b5; border-top-right-radius: 7px;
                    }
                    .t.on { background: #f6f6f6; border-left-color: transparent; height: 31px; }
                </style>
                ${names.map((n, i) => `<div class="t ${i == 0 ? 'on' : ''}"><x-icon name="${n}" size="${i == 0 ? 19 : 17}"></x-icon></div>`).join('')}`
        }
    }
    customElements.define('side-tabs', SideTabs)

    class StatusBar extends HTMLElement {
        constructor() {
            super()
            this.attachShadow({ mode: 'open' }).innerHTML = `
                <style>
                    :host { display: flex; align-items: center; flex: none; height: 22px; padding-left: 613px; background: #f0f0f0; color: #666; }
                    .on { display: flex; padding: 2px; background: #cfcfcf; margin-left: 3px; }
                    .zoom { width: 34px; margin-left: 11px; font: 13px "Open Sans", sans-serif; color: #666; }
                    .slider { position: relative; width: 87px; height: 1px; background: #aaa; margin-left: 8px; }
                    .slider i { position: absolute; left: 41px; top: -7px; width: 5px; height: 14px; background: #f0f0f0; border: 1px solid #aaa; box-sizing: border-box; }
                    .pm { width: 10px; height: 2px; background: #aaa; position: relative; }
                    .pm.plus::after { content: ""; position: absolute; left: 4px; top: -4px; width: 2px; height: 10px; background: #aaa; }
                </style>
                <x-icon name="funnel"></x-icon>
                <x-icon name="caret" size="8" style="margin-left:3px"></x-icon>
                <x-icon name="funnel2" style="margin-left:7px"></x-icon>
                <x-icon name="caret" size="8"></x-icon>
                <x-icon name="clock" size="18" style="margin-left:12px"></x-icon>
                <x-icon name="caret" size="8" style="margin-left:1px"></x-icon>
                <span class="on"><x-icon name="focus" size="16"></x-icon></span>
                <x-icon name="outline" style="margin-left:3px"></x-icon>
                <x-icon name="cal24" style="margin-left:8px"></x-icon>
                <x-icon name="circles" style="margin-left:10px"></x-icon>
                <x-icon name="tagbox" style="margin-left:8px"></x-icon>
                <x-icon name="notesbox" style="margin-left:9px"></x-icon>
                <span class="zoom">100%</span>
                <span class="pm" style="margin-left:14px"></span>
                <span class="slider"><i></i></span>
                <span class="pm plus" style="margin-left:10px"></span>
                <x-icon name="fit" style="margin-left:8px"></x-icon>
                <x-icon name="panelview" style="margin-left:14px"></x-icon>
                <x-icon name="caret" size="8"></x-icon>
                <x-icon name="grip" size="10" style="margin-left:7px"></x-icon>`
        }
    }
    customElements.define('status-bar', StatusBar)

    class WaterMark extends HTMLElement {
        constructor() {
            super()
            this.attachShadow({ mode: 'open' }).innerHTML = `
                <style>
                    :host {
                        position: absolute; left: -34px; top: 532px; line-height: 50px; white-space: nowrap;
                        transform: rotate(-23deg); transform-origin: 0 50%;
                        color: #e8291c; pointer-events: none;
                    }
                    .zh { font: 300 38px/50px "Noto Sans CJK SC", sans-serif; letter-spacing: 4.700px; }
                    .en { font: 38px/50px "Liberation Serif", serif; letter-spacing: 2.800px; margin-left: 4px; }
                </style>
                <span class="zh">本资源来自</span><span class="en">mfxmw.com</span>`
        }
    }
    customElements.define('water-mark', WaterMark)
</script>
</body>
</html>
